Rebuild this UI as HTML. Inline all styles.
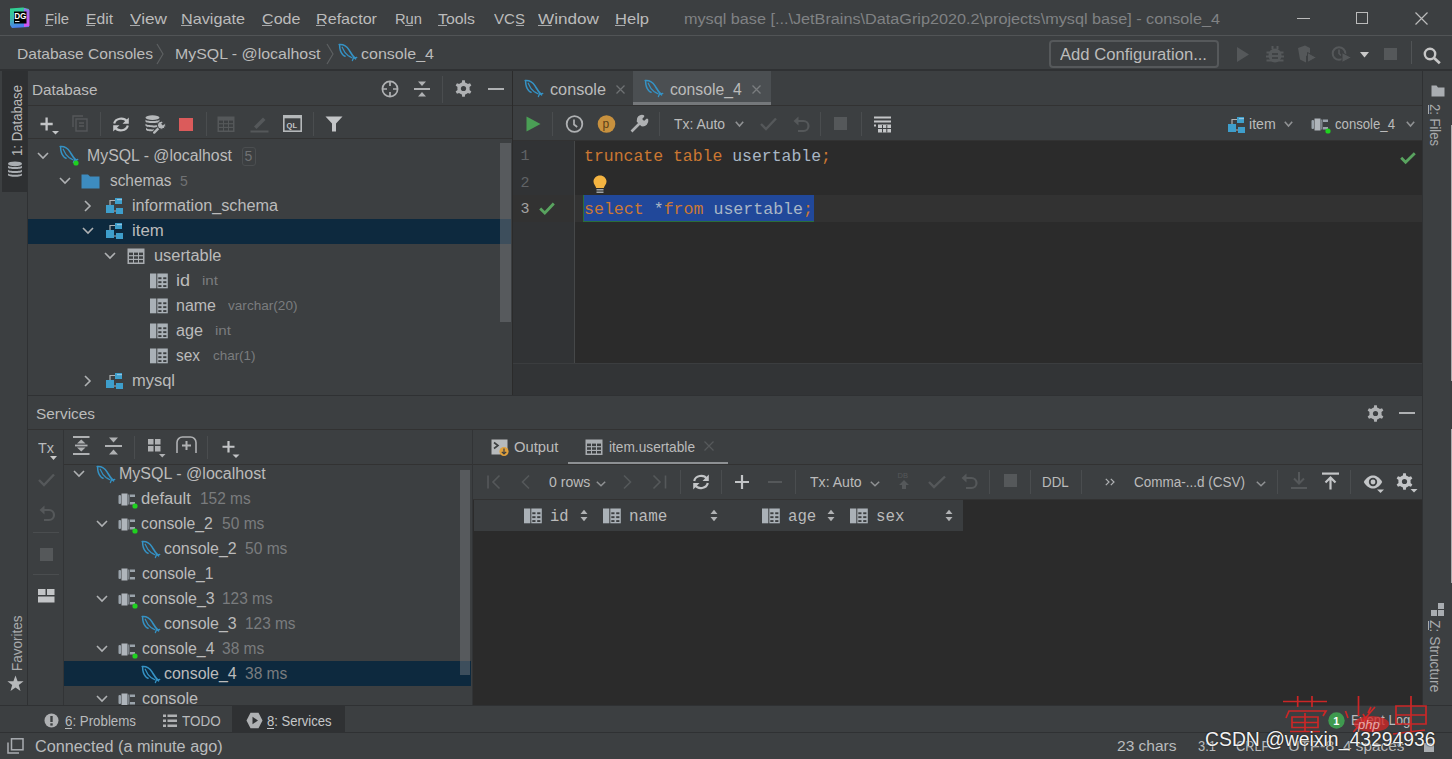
<!DOCTYPE html>
<html><head><meta charset="utf-8">
<style>
*{margin:0;padding:0;box-sizing:border-box}
html,body{width:1452px;height:759px;overflow:hidden;background:#3c3f41;font-family:"Liberation Sans",sans-serif;color:#bbbbbb}
.a{position:absolute;white-space:pre}
.r{position:absolute;overflow:visible}
</style></head><body>
<svg width="0" height="0" style="position:absolute"><defs>
<g id="dol" fill="none" stroke="#3592c4" stroke-linecap="round" stroke-linejoin="round">
<path d="M1.2 1.5C5 1.2 8.8 3.2 11 6.8C12.8 9.8 14.2 13 17.6 15.8" stroke-width="1.6"/>
<path d="M1.6 2C1.6 5.6 2.6 9.2 4.6 11.6C5.4 12.5 6.2 13 7 13.2" stroke-width="1.5"/>
<path d="M4.2 4.2C5.6 7.6 7.4 10.6 10 12.6C11.4 13.6 12.6 14.2 14 14.8" stroke-width="1.2"/>
<path d="M15.8 14.2L14.4 17.6M16.6 15L18.8 14.4" stroke-width="1.3"/>
</g>
<g id="tbld"><rect x="0.5" y="0.5" width="17" height="15.5" fill="#55585a"/><g fill="#3c3f41"><rect x="2" y="4.6" width="4" height="2.5"/><rect x="7" y="4.6" width="4" height="2.5"/><rect x="12" y="4.6" width="4" height="2.5"/><rect x="2" y="8.3" width="4" height="2.5"/><rect x="7" y="8.3" width="4" height="2.5"/><rect x="12" y="8.3" width="4" height="2.5"/><rect x="2" y="12" width="4" height="2.5"/><rect x="7" y="12" width="4" height="2.5"/><rect x="12" y="12" width="4" height="2.5"/></g></g>
<g id="conn">
<rect x="0.5" y="4" width="2.5" height="9" rx="1" fill="#9aa3ab"/>
<path d="M3.5 2.5H9.5V14.5H3.5Z" fill="#afb5bb"/>
<rect x="9.5" y="3.5" width="2" height="10" fill="#7d848a"/>
<rect x="12" y="3.5" width="5" height="2.5" fill="#9aa3ab"/>
<rect x="12" y="11" width="5" height="2.5" fill="#9aa3ab"/>
</g>
<g id="schema">
<rect x="10" y="1" width="7" height="6" fill="#3e9fcb"/>
<rect x="1" y="8" width="8" height="8" fill="#3e9ecb"/>
<rect x="11" y="11" width="7" height="6" fill="#3e9ecb"/>
<path d="M5 8V3.5H10M9 14H11" stroke="#afb1b3" stroke-width="1.2" fill="none"/>
<rect x="12" y="2" width="5" height="1.2" fill="#8fc4e4"/>
</g>
<g id="tbl"><rect x="0.5" y="0.5" width="17" height="15.5" fill="#a9adb1"/><g fill="#3c3f41"><rect x="2" y="4.6" width="4" height="2.5"/><rect x="7" y="4.6" width="4" height="2.5"/><rect x="12" y="4.6" width="4" height="2.5"/><rect x="2" y="8.3" width="4" height="2.5"/><rect x="7" y="8.3" width="4" height="2.5"/><rect x="12" y="8.3" width="4" height="2.5"/><rect x="2" y="12" width="4" height="2.5"/><rect x="7" y="12" width="4" height="2.5"/><rect x="12" y="12" width="4" height="2.5"/></g></g>
<g id="col"><rect x="0" y="0.5" width="6.3" height="14.8" fill="#aab1b7"/><rect x="7.3" y="0.5" width="10.5" height="14.8" fill="#aab1b7"/><g fill="#3c3f41"><rect x="8.3" y="4.3" width="3.2" height="1.9"/><rect x="13.2" y="4.3" width="3.2" height="1.9"/><rect x="8.3" y="8.2" width="3.2" height="1.9"/><rect x="13.2" y="8.2" width="3.2" height="1.9"/><rect x="8.3" y="12.1" width="3.2" height="1.9"/><rect x="13.2" y="12.1" width="3.2" height="1.9"/></g></g>
<g id="chevd"><path d="M1 1L6 6L11 1" fill="none" stroke="#afb1b3" stroke-width="1.6"/></g>
<g id="chevr"><path d="M1 1L6 6L1 11" fill="none" stroke="#afb1b3" stroke-width="1.6"/></g>
</defs></svg>
<div class="r" style="left:0px;top:0px;width:1452px;height:35px;background:#3c3f41;"></div>
<div class="r" style="left:0px;top:35px;width:1452px;height:1px;background:#515456;"></div>
<div class="r" style="left:0px;top:69px;width:1452px;height:2px;background:#2f3133;"></div>
<svg class="r" style="left:9px;top:7px;" width="22" height="22" viewBox="0 0 22 22"><defs><linearGradient id="lg" x1="0" y1="0" x2="0.3" y2="1"><stop offset="0" stop-color="#2bd98c"/><stop offset="0.5" stop-color="#3fb8a8"/><stop offset="1" stop-color="#4a7ef0"/></linearGradient><linearGradient id="lg2" x1="0" y1="0" x2="0" y2="1"><stop offset="0" stop-color="#9b6cf5"/><stop offset="1" stop-color="#e64cf0"/></linearGradient></defs><path d="M1 1.5L14 0.5L20 2V20L3 21L1 18Z" fill="url(#lg)"/><path d="M15 1L20.5 3V19L15 20Z" fill="url(#lg2)" opacity="0.9"/><rect x="5" y="4.5" width="12.5" height="12" fill="#000"/><text x="5.2" y="12" font-family="Liberation Sans" font-weight="bold" font-size="8.2" fill="#fff">DG</text><rect x="6" y="14" width="4.5" height="1" fill="#ddd"/></svg>
<div class="a" style="left:45px;top:8.80px;font-size:15px;line-height:20px;color:#bbbbbb;transform: scaleX(0.9929);transform-origin:0 0;">File</div>
<div class="r" style="left:45px;top:25px;width:8px;height:1px;background:#a8aaac;"></div>
<div class="a" style="left:86px;top:8.80px;font-size:15px;line-height:20px;color:#bbbbbb;transform: scaleX(1.0441);transform-origin:0 0;">Edit</div>
<div class="r" style="left:86px;top:25px;width:9px;height:1px;background:#a8aaac;"></div>
<div class="a" style="left:130px;top:8.80px;font-size:15px;line-height:20px;color:#bbbbbb;transform: scaleX(1.1473);transform-origin:0 0;">View</div>
<div class="r" style="left:130px;top:25px;width:10px;height:1px;background:#a8aaac;"></div>
<div class="a" style="left:181px;top:8.80px;font-size:15px;line-height:20px;color:#bbbbbb;transform: scaleX(1.0810);transform-origin:0 0;">Navigate</div>
<div class="r" style="left:181px;top:25px;width:11px;height:1px;background:#a8aaac;"></div>
<div class="a" style="left:262px;top:8.80px;font-size:15px;line-height:20px;color:#bbbbbb;transform: scaleX(1.0736);transform-origin:0 0;">Code</div>
<div class="r" style="left:262px;top:25px;width:10px;height:1px;background:#a8aaac;"></div>
<div class="a" style="left:316px;top:8.80px;font-size:15px;line-height:20px;color:#bbbbbb;transform: scaleX(1.0758);transform-origin:0 0;">Refactor</div>
<div class="r" style="left:316px;top:25px;width:9px;height:1px;background:#a8aaac;"></div>
<div class="a" style="left:395px;top:8.80px;font-size:15px;line-height:20px;color:#bbbbbb;transform: scaleX(0.9807);transform-origin:0 0;">Run</div>
<div class="r" style="left:405px;top:25px;width:8px;height:1px;background:#a8aaac;"></div>
<div class="a" style="left:438px;top:8.80px;font-size:15px;line-height:20px;color:#bbbbbb;transform: scaleX(1.0562);transform-origin:0 0;">Tools</div>
<div class="r" style="left:438px;top:25px;width:9px;height:1px;background:#a8aaac;"></div>
<div class="a" style="left:494px;top:8.80px;font-size:15px;line-height:20px;color:#bbbbbb;transform: scaleX(1.0051);transform-origin:0 0;">VCS</div>
<div class="r" style="left:516px;top:25px;width:8px;height:1px;background:#a8aaac;"></div>
<div class="a" style="left:538px;top:8.80px;font-size:15px;line-height:20px;color:#bbbbbb;transform: scaleX(1.1432);transform-origin:0 0;">Window</div>
<div class="r" style="left:538px;top:25px;width:14px;height:1px;background:#a8aaac;"></div>
<div class="a" style="left:615px;top:8.80px;font-size:15px;line-height:20px;color:#bbbbbb;transform: scaleX(1.1018);transform-origin:0 0;">Help</div>
<div class="r" style="left:615px;top:25px;width:10px;height:1px;background:#a8aaac;"></div>
<div class="a" style="left:684px;top:8.13px;font-size:15.5px;line-height:21px;color:#808284;transform: scaleX(1.0456);transform-origin:0 0;">mysql base [...\JetBrains\DataGrip2020.2\projects\mysql base] - console_4</div>
<div class="r" style="left:1297px;top:18px;width:13px;height:1px;background:#bbbbbb;"></div>
<div class="r" style="left:1356px;top:12px;width:12px;height:12px;background:transparent;border:1px solid #bbbbbb"></div>
<svg class="r" style="left:1415px;top:12px;" width="13" height="13" viewBox="0 0 13 13"><path d="M0.5 0.5L12.5 12.5M12.5 0.5L0.5 12.5" stroke="#bbbbbb" stroke-width="1.2"/></svg>
<div class="a" style="left:16.5px;top:43.80px;font-size:15px;line-height:20px;color:#bbbbbb;transform: scaleX(1.0388);transform-origin:0 0;">Database Consoles</div>
<svg class="r" style="left:155px;top:43px;" width="10" height="22" viewBox="0 0 10 22"><path d="M2 1L8 11L2 21" stroke="#5d6062" stroke-width="1.2" fill="none"/></svg>
<div class="a" style="left:174.5px;top:43.80px;font-size:15px;line-height:20px;color:#bbbbbb;transform: scaleX(1.0604);transform-origin:0 0;">MySQL - @localhost</div>
<svg class="r" style="left:325px;top:43px;" width="10" height="22" viewBox="0 0 10 22"><path d="M2 1L8 11L2 21" stroke="#5d6062" stroke-width="1.2" fill="none"/></svg>
<svg class="r" style="left:338px;top:43px;" width="20" height="20" viewBox="0 0 20 20"><use href="#dol"/></svg>
<div class="a" style="left:361px;top:43.80px;font-size:15px;line-height:20px;color:#bbbbbb;transform: scaleX(1.0674);transform-origin:0 0;">console_4</div>
<div class="r" style="left:1049px;top:40px;width:170px;height:28px;background:transparent;border:2px solid #56595b;border-radius:4px"></div>
<div class="a" style="left:1060px;top:43.96px;font-size:16px;line-height:21px;color:#bbbbbb;transform: scaleX(1.0394);transform-origin:0 0;">Add Configuration...</div>
<svg class="r" style="left:1236px;top:46px;" width="14" height="17" viewBox="0 0 14 17"><path d="M1 1L13 8.5L1 16Z" fill="#55585a"/></svg>
<svg class="r" style="left:1264px;top:45px;" width="22" height="18" viewBox="0 0 22 18"><g fill="#55585a"><ellipse cx="11" cy="10.5" rx="6.5" ry="7"/><rect x="7.5" y="1" width="2" height="3"/><rect x="12.5" y="1" width="2" height="3"/><rect x="2.5" y="6.5" width="17" height="2"/><rect x="2" y="10.5" width="18" height="2"/><rect x="2.5" y="14.5" width="17" height="2"/></g><rect x="8" y="8.2" width="6" height="1.6" fill="#3c3f41"/><rect x="8" y="12.2" width="6" height="1.6" fill="#3c3f41"/></svg>
<svg class="r" style="left:1297px;top:45px;" width="20" height="18" viewBox="0 0 20 18"><path d="M1 3L8 0.5L13 3V9L9 11V17.5L3 14.5Z" fill="#55585a"/><path d="M10.5 7.5L19.5 12.5L10.5 17.5Z" fill="#55585a" stroke="#3c3f41"/></svg>
<svg class="r" style="left:1331px;top:45px;" width="21" height="18" viewBox="0 0 21 18"><circle cx="8" cy="8.5" r="6.3" stroke="#55585a" stroke-width="2" fill="none"/><path d="M8 4.5V8.5L10 10.5" stroke="#55585a" stroke-width="1.6" fill="none"/><path d="M11 7.5L20.5 12.5L11 17.5Z" fill="#55585a" stroke="#3c3f41"/></svg>
<svg class="r" style="left:1360px;top:52px;" width="9" height="6" viewBox="0 0 9 6"><path d="M0 0H9L4.5 5.5Z" fill="#c9c9c9"/></svg>
<div class="r" style="left:1384px;top:48px;width:13px;height:12px;background:#55585a;"></div>
<div class="r" style="left:1411px;top:41px;width:1px;height:23px;background:#515456;"></div>
<svg class="r" style="left:1423px;top:47px;" width="19" height="17" viewBox="0 0 19 17"><circle cx="7" cy="7" r="5.2" stroke="#c7c7c7" stroke-width="2.4" fill="none"/><path d="M10.8 10.8L16.8 16.2" stroke="#c7c7c7" stroke-width="2.8"/></svg>
<div class="r" style="left:0px;top:71px;width:28px;height:635px;background:#3c3f41;"></div>
<div class="r" style="left:27px;top:71px;width:1px;height:635px;background:#2f3133;"></div>
<div class="r" style="left:2px;top:71px;width:25px;height:121px;background:#2e3032;"></div>
<div class="a" style="left:7.10px;top:155.6px;font-size:15px;line-height:20px;color:#bbbbbb;transform:rotate(-90deg) scaleX(0.8777);transform-origin:0 0;">1: Database</div>
<svg class="r" style="left:7px;top:161px;" width="16" height="17" viewBox="0 0 16 17"><g fill="#a9adb1"><ellipse cx="8" cy="2.8" rx="7" ry="2.4"/><path d="M1 4.6C1 6.6 15 6.6 15 4.6V6.6C15 8.6 1 8.6 1 6.6Z"/><path d="M1 8.4C1 10.4 15 10.4 15 8.4V10.4C15 12.4 1 12.4 1 10.4Z"/><path d="M1 12.2C1 14.2 15 14.2 15 12.2V14C15 16.4 1 16.4 1 14Z"/></g></svg>
<div class="a" style="left:8.15px;top:670.5px;font-size:14px;line-height:19px;color:#a9abad;transform:rotate(-90deg) scaleX(0.9639);transform-origin:0 0;">Favorites</div>
<svg class="r" style="left:7px;top:675px;" width="17" height="17" viewBox="0 0 17 17"><path d="M8.5 0.5L10.6 6.2L16.6 6.3L11.8 10L13.5 16L8.5 12.5L3.5 16L5.2 10L0.4 6.3L6.4 6.2Z" fill="#b7b9bb"/></svg>
<div class="r" style="left:28px;top:71px;width:484px;height:324px;background:#3c3f41;"></div>
<div class="r" style="left:28px;top:105px;width:484px;height:1px;background:#323232;"></div>
<div class="r" style="left:28px;top:138px;width:484px;height:1px;background:#323232;"></div>
<div class="r" style="left:512px;top:71px;width:1px;height:324px;background:#2b2b2b;"></div>
<div class="a" style="left:32px;top:79.13px;font-size:15.5px;line-height:21px;color:#bbbbbb;transform: scaleX(0.9870);transform-origin:0 0;">Database</div>
<svg class="r" style="left:381px;top:80px;" width="18" height="18" viewBox="0 0 18 18"><circle cx="9" cy="9" r="7.6" stroke="#afb1b3" stroke-width="1.7" fill="none"/><path d="M9 1.5V6M9 12V16.5M1.5 9H6M12 9H16.5" stroke="#afb1b3" stroke-width="1.7"/></svg>
<svg class="r" style="left:414px;top:81px;" width="16" height="16" viewBox="0 0 16 16"><rect x="0" y="7" width="16" height="2" fill="#afb1b3"/><path d="M4 0.5H12L8 5Z M4 15.5H12L8 11Z" fill="#afb1b3"/></svg>
<div class="r" style="left:442px;top:76px;width:1px;height:27px;background:#4a4d4f;"></div>
<svg class="r" style="left:455px;top:80px;" width="17" height="18" viewBox="0 0 17 18"><path d="M6.07 2.80L6.91 2.51L7.16 0.21L9.84 0.21L10.09 2.51L12.22 3.54L12.89 4.12L15.01 3.19L16.35 5.51L14.49 6.88L14.66 9.24L14.49 10.12L16.35 11.49L15.01 13.81L12.89 12.88L10.93 14.20L10.09 14.49L9.84 16.79L7.16 16.79L6.91 14.49L4.78 13.46L4.11 12.88L1.99 13.81L0.65 11.49L2.51 10.12L2.34 7.76L2.51 6.88L0.65 5.51L1.99 3.19L4.11 4.12Z" fill="#afb1b3"/><circle cx="8.5" cy="8.5" r="2.6" fill="#3c3f41"/></svg>
<div class="r" style="left:488px;top:88px;width:16px;height:2px;background:#afb1b3;"></div>
<svg class="r" style="left:40px;top:117px;" width="20" height="18" viewBox="0 0 20 18"><path d="M6.6 0.5V13.5M0.5 7H12.7" stroke="#c3c5c7" stroke-width="2.3"/><path d="M12 14H19L15.5 17.5Z" fill="#c3c5c7"/></svg>
<svg class="r" style="left:72px;top:115px;" width="16" height="17" viewBox="0 0 16 17"><g fill="none" stroke="#55585a" stroke-width="1.4"><path d="M1 12V1H11"/><rect x="4" y="4" width="11" height="12"/><path d="M7 8H12M7 11H12"/></g></svg>
<div class="r" style="left:100px;top:112px;width:1px;height:24px;background:#4a4d4f;"></div>
<svg class="r" style="left:112px;top:117px;" width="18" height="15" viewBox="0 0 18 15"><path d="M2.2 6.5A7 6 0 0 1 15 4.5M15.8 8.5A7 6 0 0 1 3 10.5" stroke="#c3c5c7" stroke-width="2.2" fill="none"/><path d="M16.8 0.5V6.8H10.5Z M1.2 14.5V8.2H7.5Z" fill="#c3c5c7"/></svg>
<svg class="r" style="left:145px;top:115px;" width="21" height="19" viewBox="0 0 21 19"><g fill="#b5b8ba"><ellipse cx="7.5" cy="2.6" rx="7" ry="2.3"/><path d="M0.5 4.6C0.5 6.6 14.5 6.6 14.5 4.6V6.6C14.5 8.6 0.5 8.6 0.5 6.6Z"/><path d="M0.5 8.6C0.5 10.6 11 10.8 12.5 10V12C11 12.8 0.5 12.6 0.5 10.6Z"/><path d="M1 12.6C1 14.4 7 14.8 9 14.3V16C7 16.6 1 16.2 1 14.4Z"/></g><path d="M9.2 17.6L14.6 12.2" stroke="#3c3f41" stroke-width="4.2" stroke-linecap="round"/><path d="M9.2 17.6L14.6 12.2" stroke="#b5b8ba" stroke-width="2.4" stroke-linecap="round"/><circle cx="16.4" cy="10.2" r="4" fill="#b5b8ba" stroke="#3c3f41" stroke-width="1"/><path d="M17 9.6L20.5 6.1" stroke="#3c3f41" stroke-width="2.4"/></svg>
<div class="r" style="left:179px;top:118px;width:14px;height:13px;background:#db5b5b;"></div>
<div class="r" style="left:206px;top:112px;width:1px;height:24px;background:#4a4d4f;"></div>
<svg class="r" style="left:217px;top:116px;" width="19" height="16" viewBox="0 0 19 16"><use href="#tbld"/></svg>
<svg class="r" style="left:250px;top:114px;" width="19" height="19" viewBox="0 0 19 19"><path d="M4 12.5L13 3.5L15.5 6L6.5 15Z" fill="#55585a"/><path d="M0.5 17.5H18.5" stroke="#55585a" stroke-width="2"/></svg>
<svg class="r" style="left:283px;top:115px;" width="19" height="17" viewBox="0 0 19 17"><rect x="0.8" y="0.8" width="17.4" height="15.4" fill="none" stroke="#b5b8ba" stroke-width="1.6"/><rect x="0.8" y="0.8" width="17.4" height="2.5" fill="#b5b8ba"/><text x="3.6" y="13" font-family="Liberation Sans" font-weight="bold" font-size="7.5" fill="#c5c7c9">QL</text></svg>
<div class="r" style="left:313px;top:112px;width:1px;height:24px;background:#4a4d4f;"></div>
<svg class="r" style="left:325px;top:116px;" width="18" height="16" viewBox="0 0 18 16"><path d="M0.5 0.5H17.5L11 7.5V15.5H7V7.5Z" fill="#c3c5c7"/></svg>
<div class="r" style="left:28px;top:218.5px;width:483px;height:25px;background:#0d293e;"></div>
<svg class="r" style="left:37px;top:152px;" width="12" height="8" viewBox="0 0 12 8"><use href="#chevd"/></svg>
<svg class="r" style="left:59px;top:145px;" width="20" height="20" viewBox="0 0 20 20"><use href="#dol"/></svg>
<svg class="r" style="left:73px;top:160px;" width="6" height="6" viewBox="0 0 6 6"><circle cx="3" cy="3" r="2.6" fill="#1fd11f"/></svg>
<div class="a" style="left:87px;top:145.46px;font-size:16px;line-height:21px;color:#bbbbbb;transform: scaleX(0.9907);transform-origin:0 0;">MySQL - @localhost</div>
<div class="r" style="left:242px;top:147px;width:14px;height:19px;background:transparent;border:1px solid #4b4e50;border-radius:3px"></div>
<div class="a" style="left:244.5px;top:147.15px;font-size:14px;line-height:19px;color:#707274;">5</div>
<svg class="r" style="left:59px;top:177px;" width="12" height="8" viewBox="0 0 12 8"><use href="#chevd"/></svg>
<svg class="r" style="left:81px;top:173px;" width="19" height="16" viewBox="0 0 19 16"><path d="M0.5 1.5H7L9 3.5H18.5V15.5H0.5Z" fill="#3d8cc0"/></svg>
<div class="a" style="left:109.5px;top:169.96px;font-size:16px;line-height:21px;color:#bbbbbb;transform: scaleX(0.9605);transform-origin:0 0;">schemas</div>
<div class="a" style="left:180px;top:171.65px;font-size:14px;line-height:19px;color:#707274;">5</div>
<svg class="r" style="left:84px;top:200px;" width="8" height="12" viewBox="0 0 8 12"><use href="#chevr"/></svg>
<svg class="r" style="left:105px;top:197px;" width="18" height="18" viewBox="0 0 18 18"><use href="#schema"/></svg>
<div class="a" style="left:131.8px;top:194.96px;font-size:16px;line-height:21px;color:#bbbbbb;transform: scaleX(1.0133);transform-origin:0 0;">information_schema</div>
<svg class="r" style="left:82px;top:227px;" width="12" height="8" viewBox="0 0 12 8"><use href="#chevd"/></svg>
<svg class="r" style="left:105px;top:222px;" width="18" height="18" viewBox="0 0 18 18"><use href="#schema"/></svg>
<div class="a" style="left:131.8px;top:219.96px;font-size:16px;line-height:21px;color:#bbbbbb;transform: scaleX(1.0485);transform-origin:0 0;">item</div>
<svg class="r" style="left:104px;top:252px;" width="12" height="8" viewBox="0 0 12 8"><use href="#chevd"/></svg>
<svg class="r" style="left:127px;top:248px;" width="18" height="16" viewBox="0 0 18 16"><use href="#tbl"/></svg>
<div class="a" style="left:154px;top:244.96px;font-size:16px;line-height:21px;color:#bbbbbb;transform: scaleX(1.0239);transform-origin:0 0;">usertable</div>
<svg class="r" style="left:150px;top:273px;" width="18" height="16" viewBox="0 0 18 16"><use href="#col"/></svg>
<div class="a" style="left:176px;top:270.46px;font-size:16px;line-height:21px;color:#bbbbbb;transform: scaleX(1.1242);transform-origin:0 0;">id</div>
<div class="a" style="left:202px;top:272.32px;font-size:13.5px;line-height:18px;color:#7a7c7e;transform: scaleX(1.1216);transform-origin:0 0;">int</div>
<svg class="r" style="left:150px;top:298px;" width="18" height="16" viewBox="0 0 18 16"><use href="#col"/></svg>
<div class="a" style="left:176px;top:295.46px;font-size:16px;line-height:21px;color:#bbbbbb;transform: scaleX(0.9992);transform-origin:0 0;">name</div>
<div class="a" style="left:228px;top:297.32px;font-size:13.5px;line-height:18px;color:#7a7c7e;transform: scaleX(1.0068);transform-origin:0 0;">varchar(20)</div>
<svg class="r" style="left:150px;top:323px;" width="18" height="16" viewBox="0 0 18 16"><use href="#col"/></svg>
<div class="a" style="left:176px;top:320.46px;font-size:16px;line-height:21px;color:#bbbbbb;transform: scaleX(1.0111);transform-origin:0 0;">age</div>
<div class="a" style="left:215px;top:322.32px;font-size:13.5px;line-height:18px;color:#7a7c7e;transform: scaleX(1.1216);transform-origin:0 0;">int</div>
<svg class="r" style="left:150px;top:348px;" width="18" height="16" viewBox="0 0 18 16"><use href="#col"/></svg>
<div class="a" style="left:176px;top:345.46px;font-size:16px;line-height:21px;color:#bbbbbb;transform: scaleX(0.9636);transform-origin:0 0;">sex</div>
<div class="a" style="left:212.5px;top:347.32px;font-size:13.5px;line-height:18px;color:#7a7c7e;transform: scaleX(0.9938);transform-origin:0 0;">char(1)</div>
<svg class="r" style="left:84px;top:375px;" width="8" height="12" viewBox="0 0 8 12"><use href="#chevr"/></svg>
<svg class="r" style="left:105px;top:372px;" width="18" height="18" viewBox="0 0 18 18"><use href="#schema"/></svg>
<div class="a" style="left:131.5px;top:369.96px;font-size:16px;line-height:21px;color:#bbbbbb;transform: scaleX(1.0292);transform-origin:0 0;">mysql</div>
<div class="r" style="left:500px;top:143px;width:11px;height:179px;background:rgba(120,124,128,0.45);"></div>
<div class="r" style="left:513px;top:71px;width:909px;height:34px;background:#3c3f41;"></div>
<div class="r" style="left:633px;top:71px;width:138px;height:34px;background:#4b4f52;"></div>
<div class="r" style="left:633px;top:102px;width:138px;height:3px;background:#75787b;"></div>
<div class="r" style="left:513px;top:105px;width:909px;height:1px;background:#323232;"></div>
<svg class="r" style="left:524px;top:79px;" width="20" height="19" viewBox="0 0 20 19"><use href="#dol"/></svg>
<div class="a" style="left:549.5px;top:78.96px;font-size:16px;line-height:21px;color:#bbbbbb;transform: scaleX(1.0153);transform-origin:0 0;">console</div>
<svg class="r" style="left:616px;top:85px;" width="9" height="9" viewBox="0 0 9 9"><path d="M0.5 0.5L8.5 8.5M8.5 0.5L0.5 8.5" stroke="#6e7173" stroke-width="1.3"/></svg>
<svg class="r" style="left:644px;top:79px;" width="20" height="19" viewBox="0 0 20 19"><use href="#dol"/></svg>
<div class="a" style="left:669.7px;top:78.96px;font-size:16px;line-height:21px;color:#bbbbbb;transform: scaleX(0.9828);transform-origin:0 0;">console_4</div>
<svg class="r" style="left:752px;top:85px;" width="9" height="9" viewBox="0 0 9 9"><path d="M0.5 0.5L8.5 8.5M8.5 0.5L0.5 8.5" stroke="#7a7d7f" stroke-width="1.3"/></svg>
<div class="r" style="left:513px;top:106px;width:909px;height:34px;background:#3c3f41;"></div>
<div class="r" style="left:513px;top:140px;width:909px;height:1px;background:#323232;"></div>
<svg class="r" style="left:526px;top:116px;" width="15" height="16" viewBox="0 0 15 16"><path d="M0.5 0.5L14.5 8L0.5 15.5Z" fill="#4a9f55"/></svg>
<div class="r" style="left:552px;top:112px;width:1px;height:24px;background:#4a4d4f;"></div>
<svg class="r" style="left:565px;top:115px;" width="19" height="18" viewBox="0 0 19 18"><circle cx="9.5" cy="9" r="7.8" stroke="#afb1b3" stroke-width="1.8" fill="none"/><path d="M9 4.5V9.5L12.2 12" stroke="#afb1b3" stroke-width="1.7" fill="none"/></svg>
<svg class="r" style="left:597px;top:115px;" width="19" height="18" viewBox="0 0 19 18"><circle cx="9.5" cy="9" r="8.8" fill="#c8913e"/><text x="5.6" y="12.6" font-family="Liberation Sans" font-size="12" fill="#5b3f17">p</text></svg>
<svg class="r" style="left:630px;top:115px;" width="19" height="18" viewBox="0 0 19 18"><path d="M1.5 16.5L9.5 8.5M8 6C7.5 3 10 0.5 13 1.2L10.8 3.5L12 6.2L14.8 7.2L17 5C17.6 8 15 10.5 12 10Z" stroke="#afb1b3" stroke-width="2.6" fill="#afb1b3" stroke-linejoin="round"/></svg>
<div class="r" style="left:659px;top:112px;width:1px;height:24px;background:#4a4d4f;"></div>
<div class="a" style="left:674px;top:115.48px;font-size:14.5px;line-height:19px;color:#bbbbbb;transform: scaleX(0.9586);transform-origin:0 0;">Tx: Auto</div>
<svg class="r" style="left:735px;top:121px;" width="9" height="7" viewBox="0 0 9 7"><path d="M0.8 0.8L4.5 5L8.2 0.8" stroke="#909294" stroke-width="1.6" fill="none"/></svg>
<svg class="r" style="left:760px;top:117px;" width="17" height="14" viewBox="0 0 17 14"><path d="M1 7L6 12L16 1.5" stroke="#55585a" stroke-width="2.4" fill="none"/></svg>
<svg class="r" style="left:793px;top:116px;" width="17" height="16" viewBox="0 0 17 16"><path d="M2 5H10.5A5 5 0 0 1 10.5 15H5" stroke="#55585a" stroke-width="2.2" fill="none"/><path d="M0.5 5L5.5 0.5V9.5Z" fill="#55585a"/></svg>
<div class="r" style="left:820px;top:112px;width:1px;height:24px;background:#4a4d4f;"></div>
<div class="r" style="left:834px;top:117px;width:13px;height:13px;background:#55585a;"></div>
<div class="r" style="left:861px;top:112px;width:1px;height:24px;background:#4a4d4f;"></div>
<svg class="r" style="left:874px;top:116px;" width="18" height="17" viewBox="0 0 18 17"><g fill="#c3c5c7"><rect x="0" y="0.5" width="17" height="2"/><rect x="0" y="4.5" width="17" height="2"/><rect x="0" y="8.5" width="2" height="2"/><rect x="4" y="8.5" width="13" height="8"/></g><path d="M4 12.5H17M8.5 9V16.5M12.8 9V16.5" stroke="#3c3f41" stroke-width="1"/></svg>
<svg class="r" style="left:1227px;top:116px;" width="18" height="18" viewBox="0 0 18 18"><use href="#schema"/></svg>
<div class="a" style="left:1249px;top:115.48px;font-size:14.5px;line-height:19px;color:#bbbbbb;transform: scaleX(0.9742);transform-origin:0 0;">item</div>
<svg class="r" style="left:1284px;top:121px;" width="9" height="7" viewBox="0 0 9 7"><path d="M0.8 0.8L4.5 5L8.2 0.8" stroke="#909294" stroke-width="1.6" fill="none"/></svg>
<svg class="r" style="left:1311px;top:116px;" width="18" height="17" viewBox="0 0 18 17"><use href="#conn"/></svg>
<svg class="r" style="left:1325px;top:128px;" width="6" height="6" viewBox="0 0 6 6"><circle cx="3" cy="3" r="2.6" fill="#1fd11f"/></svg>
<div class="a" style="left:1335px;top:115.48px;font-size:14.5px;line-height:19px;color:#bbbbbb;transform: scaleX(0.9076);transform-origin:0 0;">console_4</div>
<svg class="r" style="left:1406px;top:121px;" width="9" height="7" viewBox="0 0 9 7"><path d="M0.8 0.8L4.5 5L8.2 0.8" stroke="#909294" stroke-width="1.6" fill="none"/></svg>
<div class="r" style="left:513px;top:141px;width:909px;height:254px;background:#2b2b2b;"></div>
<div class="r" style="left:513px;top:141px;width:61px;height:254px;background:#313335;"></div>
<div class="r" style="left:574px;top:141px;width:1px;height:254px;background:#464849;"></div>
<div class="r" style="left:575px;top:195px;width:847px;height:27px;background:#323232;"></div>
<div class="r" style="left:513px;top:195px;width:61px;height:27px;background:#323232;"></div>
<div class="a" style="left:520.4px;top:147.40px;font-size:15px;line-height:20px;color:#606366;font-family:'Liberation Mono',monospace;">1</div>
<div class="a" style="left:520.4px;top:174.00px;font-size:15px;line-height:20px;color:#606366;font-family:'Liberation Mono',monospace;">2</div>
<div class="a" style="left:520.4px;top:200.00px;font-size:15px;line-height:20px;color:#a4a3a3;font-family:'Liberation Mono',monospace;">3</div>
<svg class="r" style="left:539px;top:202px;" width="16" height="13" viewBox="0 0 16 13"><path d="M1.2 6.5L5.8 11L14.8 1.5" stroke="#59a35f" stroke-width="2.8" fill="none"/></svg>
<div class="a" style="left:584px;top:146.00px;font-size:16.5px;line-height:22px;color:#cc7832;font-family:'Liberation Mono',monospace;transform: scaleX(0.9977);transform-origin:0 0;"><span style="color:#cc7832">truncate table</span><span style="color:#a9b7c6"> usertable</span><span style="color:#cc7832">;</span></div>
<svg class="r" style="left:593px;top:175px;" width="14" height="19" viewBox="0 0 14 19"><path d="M7 0.5C10.6 0.5 13.5 3.2 13.5 6.6C13.5 9.2 11.6 10.6 10.8 13H3.2C2.4 10.6 0.5 9.2 0.5 6.6C0.5 3.2 3.4 0.5 7 0.5Z" fill="#f4b441"/><rect x="3.5" y="14" width="7" height="1.5" fill="#9ea3a6"/><rect x="3.5" y="16.5" width="7" height="1.5" fill="#9ea3a6"/></svg>
<div class="r" style="left:583px;top:195px;width:231px;height:27px;background:#21489a;box-shadow:inset 1px -1px 0 #2a6e3a"></div>
<div class="a" style="left:584px;top:198.80px;font-size:16.5px;line-height:22px;color:#cc7832;font-family:'Liberation Mono',monospace;transform: scaleX(1.0054);transform-origin:0 0;"><span style="color:#cc7832">select </span><span style="color:#a9b7c6">*</span><span style="color:#cc7832">from</span><span style="color:#a9b7c6"> usertable</span><span style="color:#cc7832">;</span></div>
<div class="r" style="left:513px;top:363px;width:909px;height:1px;background:#3b3d3f;"></div>
<div class="r" style="left:513px;top:364px;width:909px;height:31px;background:#323436;"></div>
<svg class="r" style="left:1400px;top:152px;" width="16" height="12" viewBox="0 0 16 12"><path d="M1.2 5.8L5.6 10.2L14.8 1.2" stroke="#59a35f" stroke-width="2.8" fill="none"/></svg>
<div class="r" style="left:1422px;top:71px;width:30px;height:635px;background:#3c3f41;"></div>
<div class="r" style="left:1422px;top:71px;width:1px;height:635px;background:#2f3133;"></div>
<svg class="r" style="left:1431px;top:85px;" width="14" height="12" viewBox="0 0 14 12"><path d="M0.5 0.5H5.5L7 2.5H13.5V11.5H0.5Z" fill="#a9adb1"/></svg>
<div class="r" style="left:1428px;top:105px;width:1px;height:9px;background:#a9abad;"></div>
<div class="a" style="left:1444px;top:104px;font-size:14px;line-height:18px;color:#a9abad;transform:rotate(90deg) scaleX(0.93);transform-origin:0 0;">2: Files</div>
<svg class="r" style="left:1431px;top:603px;" width="14" height="14" viewBox="0 0 14 14"><g fill="#a9adb1"><rect x="7" y="0" width="6" height="6"/><rect x="0" y="7" width="6" height="6"/><rect x="7" y="7" width="6" height="6"/></g></svg>
<div class="r" style="left:1428px;top:621px;width:1px;height:9px;background:#a9abad;"></div>
<div class="a" style="left:1444px;top:620px;font-size:14px;line-height:18px;color:#a9abad;transform:rotate(90deg) scaleX(0.99);transform-origin:0 0;">Z: Structure</div>
<div class="r" style="left:28px;top:395px;width:1394px;height:311px;background:#3c3f41;"></div>
<div class="r" style="left:28px;top:395px;width:1394px;height:1px;background:#2f3133;"></div>
<div class="a" style="left:36.3px;top:403.13px;font-size:15.5px;line-height:21px;color:#bbbbbb;transform: scaleX(0.9926);transform-origin:0 0;">Services</div>
<svg class="r" style="left:1367px;top:405px;" width="17" height="17" viewBox="0 0 17 17"><path d="M6.07 2.80L6.91 2.51L7.16 0.21L9.84 0.21L10.09 2.51L12.22 3.54L12.89 4.12L15.01 3.19L16.35 5.51L14.49 6.88L14.66 9.24L14.49 10.12L16.35 11.49L15.01 13.81L12.89 12.88L10.93 14.20L10.09 14.49L9.84 16.79L7.16 16.79L6.91 14.49L4.78 13.46L4.11 12.88L1.99 13.81L0.65 11.49L2.51 10.12L2.34 7.76L2.51 6.88L0.65 5.51L1.99 3.19L4.11 4.12Z" fill="#afb1b3"/><circle cx="8.5" cy="8.5" r="2.6" fill="#3c3f41"/></svg>
<div class="r" style="left:1399px;top:412px;width:16px;height:2px;background:#afb1b3;"></div>
<div class="r" style="left:28px;top:429px;width:1394px;height:1px;background:#323232;"></div>
<div class="r" style="left:63px;top:430px;width:1px;height:276px;background:#323436;"></div>
<div class="a" style="left:38px;top:439.48px;font-size:14.5px;line-height:19px;color:#b9bbbd;transform: scaleX(0.9932);transform-origin:0 0;">Tx</div>
<svg class="r" style="left:50px;top:456px;" width="7" height="4" viewBox="0 0 7 4"><path d="M0 0H7L3.5 4Z" fill="#c9c9c9"/></svg>
<svg class="r" style="left:38px;top:473px;" width="17" height="14" viewBox="0 0 17 14"><path d="M1 7L6 12L16 1.5" stroke="#55585a" stroke-width="2.4" fill="none"/></svg>
<svg class="r" style="left:39px;top:505px;" width="16" height="17" viewBox="0 0 16 17"><path d="M2 5H10A5 5 0 0 1 10 15H5" stroke="#55585a" stroke-width="2.2" fill="none"/><path d="M0.5 5L5.5 0.5V9.5Z" fill="#55585a"/></svg>
<div class="r" style="left:33px;top:532px;width:26px;height:1px;background:#4a4d4f;"></div>
<div class="r" style="left:40px;top:548px;width:13px;height:13px;background:#55585a;"></div>
<div class="r" style="left:33px;top:574px;width:26px;height:1px;background:#4a4d4f;"></div>
<svg class="r" style="left:38px;top:589px;" width="17" height="14" viewBox="0 0 17 14"><g fill="#c3c5c7"><rect x="0" y="0" width="7.5" height="6"/><rect x="9" y="0" width="7.5" height="6"/><rect x="0" y="7.5" width="16.5" height="6"/></g></svg>
<div class="r" style="left:64px;top:464px;width:408px;height:1px;background:#323232;"></div>
<svg class="r" style="left:73px;top:436px;" width="17" height="20" viewBox="0 0 17 20"><g fill="#afb1b3"><rect x="0" y="0" width="16.5" height="2"/><rect x="0" y="17" width="16.5" height="2"/><path d="M4 7.5L8.25 3.5L12.5 7.5Z M4 11.5L8.25 15.5L12.5 11.5Z"/><rect x="2" y="8.6" width="12.5" height="1.8"/></g></svg>
<svg class="r" style="left:105px;top:437px;" width="17" height="18" viewBox="0 0 17 18"><g fill="#afb1b3"><rect x="0" y="8" width="17" height="2"/><path d="M4 0.5H13L8.5 5.5Z M4 17.5H13L8.5 12.5Z"/></g></svg>
<div class="r" style="left:134px;top:436px;width:1px;height:23px;background:#4a4d4f;"></div>
<svg class="r" style="left:148px;top:439px;" width="18" height="19" viewBox="0 0 18 19"><g fill="#afb1b3"><rect x="0" y="0" width="5.5" height="5.5"/><rect x="7" y="0" width="5.5" height="5.5"/><rect x="0" y="7" width="5.5" height="5.5"/><rect x="7" y="7" width="5.5" height="5.5"/><path d="M11 15H17.5L14.25 18.5Z"/></g></svg>
<svg class="r" style="left:176px;top:436px;" width="21" height="18" viewBox="0 0 21 18"><path d="M1 17V6.5A5.5 5.5 0 0 1 6.5 1H14.5A5.5 5.5 0 0 1 20 6.5V17" stroke="#afb1b3" stroke-width="1.6" fill="none"/><path d="M10.5 5V14M6 9.5H15" stroke="#afb1b3" stroke-width="2"/></svg>
<div class="r" style="left:207px;top:436px;width:1px;height:23px;background:#4a4d4f;"></div>
<svg class="r" style="left:222px;top:441px;" width="19" height="18" viewBox="0 0 19 18"><path d="M6.5 0V11.5M0.5 5.75H12.5" stroke="#c3c5c7" stroke-width="2.2"/><path d="M10.5 13.5H17.5L14 17Z" fill="#c3c5c7"/></svg>
<div class="r" style="left:64px;top:661px;width:407px;height:25px;background:#0d293e;"></div>
<svg class="r" style="left:73px;top:469.5px;" width="12" height="8" viewBox="0 0 12 8"><use href="#chevd"/></svg>
<svg class="r" style="left:96px;top:464.5px;" width="19" height="18" viewBox="0 0 19 18"><use href="#dol"/></svg>
<div class="a" style="left:119.3px;top:462.96px;font-size:16px;line-height:21px;color:#bbbbbb;transform: scaleX(1.0016);transform-origin:0 0;">MySQL - @localhost</div>
<svg class="r" style="left:118.4px;top:490.5px;" width="18" height="17" viewBox="0 0 18 17"><use href="#conn"/></svg>
<svg class="r" style="left:132.4px;top:502.5px;" width="6" height="6" viewBox="0 0 6 6"><circle cx="3" cy="3" r="2.6" fill="#1fd11f"/></svg>
<div class="a" style="left:141.4px;top:487.96px;font-size:16px;line-height:21px;color:#bbbbbb;transform: scaleX(1.0365);transform-origin:0 0;">default</div>
<div class="a" style="left:200.4px;top:487.96px;font-size:16px;line-height:21px;color:#7a7c7e;transform: scaleX(0.9644);transform-origin:0 0;">152 ms</div>
<svg class="r" style="left:96px;top:519.5px;" width="12" height="8" viewBox="0 0 12 8"><use href="#chevd"/></svg>
<svg class="r" style="left:118.4px;top:515.5px;" width="18" height="17" viewBox="0 0 18 17"><use href="#conn"/></svg>
<svg class="r" style="left:132.4px;top:527.5px;" width="6" height="6" viewBox="0 0 6 6"><circle cx="3" cy="3" r="2.6" fill="#1fd11f"/></svg>
<div class="a" style="left:141.4px;top:512.96px;font-size:16px;line-height:21px;color:#bbbbbb;transform: scaleX(0.9856);transform-origin:0 0;">console_2</div>
<div class="a" style="left:221.6px;top:512.96px;font-size:16px;line-height:21px;color:#7a7c7e;transform: scaleX(0.9730);transform-origin:0 0;">50 ms</div>
<svg class="r" style="left:140.5px;top:539.5px;" width="19" height="18" viewBox="0 0 19 18"><use href="#dol"/></svg>
<div class="a" style="left:164.3px;top:537.96px;font-size:16px;line-height:21px;color:#bbbbbb;transform: scaleX(0.9965);transform-origin:0 0;">console_2</div>
<div class="a" style="left:244.6px;top:537.96px;font-size:16px;line-height:21px;color:#7a7c7e;transform: scaleX(0.9730);transform-origin:0 0;">50 ms</div>
<svg class="r" style="left:118.4px;top:565.5px;" width="18" height="17" viewBox="0 0 18 17"><use href="#conn"/></svg>
<div class="a" style="left:141.5px;top:562.96px;font-size:16px;line-height:21px;color:#bbbbbb;transform: scaleX(0.9801);transform-origin:0 0;">console_1</div>
<svg class="r" style="left:96px;top:594.5px;" width="12" height="8" viewBox="0 0 12 8"><use href="#chevd"/></svg>
<svg class="r" style="left:118.4px;top:590.5px;" width="18" height="17" viewBox="0 0 18 17"><use href="#conn"/></svg>
<svg class="r" style="left:132.4px;top:602.5px;" width="6" height="6" viewBox="0 0 6 6"><circle cx="3" cy="3" r="2.6" fill="#1fd11f"/></svg>
<div class="a" style="left:141.5px;top:587.96px;font-size:16px;line-height:21px;color:#bbbbbb;transform: scaleX(0.9965);transform-origin:0 0;">console_3</div>
<div class="a" style="left:222px;top:587.96px;font-size:16px;line-height:21px;color:#7a7c7e;transform: scaleX(0.9663);transform-origin:0 0;">123 ms</div>
<svg class="r" style="left:140.5px;top:614.5px;" width="19" height="18" viewBox="0 0 19 18"><use href="#dol"/></svg>
<div class="a" style="left:164.3px;top:612.96px;font-size:16px;line-height:21px;color:#bbbbbb;transform: scaleX(0.9965);transform-origin:0 0;">console_3</div>
<div class="a" style="left:245px;top:612.96px;font-size:16px;line-height:21px;color:#7a7c7e;transform: scaleX(0.9625);transform-origin:0 0;">123 ms</div>
<svg class="r" style="left:96px;top:644.5px;" width="12" height="8" viewBox="0 0 12 8"><use href="#chevd"/></svg>
<svg class="r" style="left:118.4px;top:640.5px;" width="18" height="17" viewBox="0 0 18 17"><use href="#conn"/></svg>
<svg class="r" style="left:132.4px;top:652.5px;" width="6" height="6" viewBox="0 0 6 6"><circle cx="3" cy="3" r="2.6" fill="#1fd11f"/></svg>
<div class="a" style="left:141.5px;top:637.96px;font-size:16px;line-height:21px;color:#bbbbbb;transform: scaleX(0.9938);transform-origin:0 0;">console_4</div>
<div class="a" style="left:221.5px;top:637.96px;font-size:16px;line-height:21px;color:#7a7c7e;transform: scaleX(0.9707);transform-origin:0 0;">38 ms</div>
<svg class="r" style="left:140.5px;top:664.5px;" width="19" height="18" viewBox="0 0 19 18"><use href="#dol"/></svg>
<div class="a" style="left:164.3px;top:662.96px;font-size:16px;line-height:21px;color:#bbbbbb;transform: scaleX(0.9965);transform-origin:0 0;">console_4</div>
<div class="a" style="left:244.6px;top:662.96px;font-size:16px;line-height:21px;color:#7a7c7e;transform: scaleX(0.9707);transform-origin:0 0;">38 ms</div>
<svg class="r" style="left:96px;top:694.5px;" width="12" height="8" viewBox="0 0 12 8"><use href="#chevd"/></svg>
<svg class="r" style="left:118.4px;top:690.5px;" width="18" height="17" viewBox="0 0 18 17"><use href="#conn"/></svg>
<div class="a" style="left:141.5px;top:687.96px;font-size:16px;line-height:21px;color:#bbbbbb;transform: scaleX(1.0189);transform-origin:0 0;">console</div>
<div class="r" style="left:460px;top:470px;width:10px;height:205px;background:rgba(120,124,128,0.45);"></div>
<div class="r" style="left:472px;top:430px;width:1px;height:276px;background:#323436;"></div>
<div class="r" style="left:473px;top:430px;width:949px;height:34px;background:#3c3f41;"></div>
<svg class="r" style="left:491px;top:439px;" width="18" height="17" viewBox="0 0 18 17"><path d="M0.5 0.5H16.5V11H9.5V15.5H0.5Z" fill="#b7babc"/><path d="M3 3.5L7 6.5L3 9.5" stroke="#3c3f41" stroke-width="1.6" fill="none"/><circle cx="13" cy="12.5" r="4.6" fill="#e0a03c"/><path d="M13 9.5V15M10.8 12.8L13 15L15.2 12.8" stroke="#3c3f41" stroke-width="1.2" fill="none"/></svg>
<div class="a" style="left:514.4px;top:436.80px;font-size:15px;line-height:20px;color:#bbbbbb;transform: scaleX(0.9860);transform-origin:0 0;">Output</div>
<svg class="r" style="left:585px;top:439px;" width="18" height="16" viewBox="0 0 18 16"><use href="#tbl"/></svg>
<div class="a" style="left:608.8px;top:436.80px;font-size:15px;line-height:20px;color:#bbbbbb;transform: scaleX(0.9128);transform-origin:0 0;">item.usertable</div>
<svg class="r" style="left:704px;top:441px;" width="10" height="10" viewBox="0 0 10 10"><path d="M0.5 0.5L9.5 9.5M9.5 0.5L0.5 9.5" stroke="#56595b" stroke-width="1.3"/></svg>
<div class="r" style="left:568px;top:461.5px;width:160px;height:2.5px;background:#8d9093;"></div>
<div class="r" style="left:473px;top:464px;width:949px;height:1px;background:#323232;"></div>
<div class="r" style="left:473px;top:465px;width:949px;height:34px;background:#3c3f41;"></div>
<div class="r" style="left:473px;top:499px;width:949px;height:1px;background:#323232;"></div>
<svg class="r" style="left:487px;top:475px;" width="14" height="14" viewBox="0 0 14 14"><path d="M1 0.5V13.5M12.5 0.5L6 7L12.5 13.5" stroke="#55585a" stroke-width="1.6" fill="none"/></svg>
<svg class="r" style="left:521px;top:475px;" width="9" height="14" viewBox="0 0 9 14"><path d="M8 0.5L1.5 7L8 13.5" stroke="#55585a" stroke-width="1.6" fill="none"/></svg>
<div class="a" style="left:548.8px;top:473.48px;font-size:14.5px;line-height:19px;color:#bbbbbb;transform: scaleX(0.9691);transform-origin:0 0;">0 rows</div>
<svg class="r" style="left:596px;top:481px;" width="10" height="6" viewBox="0 0 10 6"><path d="M0.8 0.8L5 4.8L9.2 0.8" stroke="#909294" stroke-width="1.5" fill="none"/></svg>
<svg class="r" style="left:623px;top:475px;" width="9" height="14" viewBox="0 0 9 14"><path d="M1 0.5L7.5 7L1 13.5" stroke="#55585a" stroke-width="1.6" fill="none"/></svg>
<svg class="r" style="left:652px;top:475px;" width="15" height="14" viewBox="0 0 15 14"><path d="M1.5 0.5L8 7L1.5 13.5M13.5 0.5V13.5" stroke="#55585a" stroke-width="1.6" fill="none"/></svg>
<div class="r" style="left:680px;top:470px;width:1px;height:24px;background:#4a4d4f;"></div>
<svg class="r" style="left:692px;top:474px;" width="18" height="16" viewBox="0 0 18 16"><path d="M2.2 7A7 6.2 0 0 1 15 4.8M15.8 9A7 6.2 0 0 1 3 11.2" stroke="#c3c5c7" stroke-width="2.2" fill="none"/><path d="M16.8 0.5V7H10.5Z M1.2 15.5V9H7.5Z" fill="#c3c5c7"/></svg>
<div class="r" style="left:721px;top:470px;width:1px;height:24px;background:#4a4d4f;"></div>
<svg class="r" style="left:735px;top:475px;" width="14" height="14" viewBox="0 0 14 14"><path d="M7 0V14M0 7H14" stroke="#c3c5c7" stroke-width="2.2"/></svg>
<div class="r" style="left:768px;top:481px;width:14px;height:2px;background:#55585a;"></div>
<div class="r" style="left:795px;top:470px;width:1px;height:24px;background:#4a4d4f;"></div>
<div class="a" style="left:809.5px;top:473.48px;font-size:14.5px;line-height:19px;color:#bbbbbb;transform: scaleX(0.9717);transform-origin:0 0;">Tx: Auto</div>
<svg class="r" style="left:870px;top:481px;" width="10" height="6" viewBox="0 0 10 6"><path d="M0.8 0.8L5 4.8L9.2 0.8" stroke="#909294" stroke-width="1.5" fill="none"/></svg>
<svg class="r" style="left:896px;top:471px;" width="16" height="19" viewBox="0 0 16 19"><text x="1.5" y="7" font-family="Liberation Sans" font-size="7.5" fill="#55585a">DB</text><path d="M3 14L8 9L13 14H10V18H6V14Z" fill="#55585a"/></svg>
<svg class="r" style="left:928px;top:475px;" width="18" height="14" viewBox="0 0 18 14"><path d="M1 7L6 12L17 1.5" stroke="#55585a" stroke-width="2.4" fill="none"/></svg>
<svg class="r" style="left:961px;top:473px;" width="17" height="16" viewBox="0 0 17 16"><path d="M2 5H10.5A5 5 0 0 1 10.5 15H5" stroke="#55585a" stroke-width="2.2" fill="none"/><path d="M0.5 5L5.5 0.5V9.5Z" fill="#55585a"/></svg>
<div class="r" style="left:989px;top:470px;width:1px;height:24px;background:#4a4d4f;"></div>
<div class="r" style="left:1004px;top:474px;width:13px;height:13px;background:#55585a;"></div>
<div class="r" style="left:1030px;top:470px;width:1px;height:24px;background:#4a4d4f;"></div>
<div class="a" style="left:1042px;top:473.48px;font-size:14.5px;line-height:19px;color:#bbbbbb;transform: scaleX(0.9202);transform-origin:0 0;">DDL</div>
<div class="r" style="left:1081px;top:470px;width:1px;height:24px;background:#4a4d4f;"></div>
<svg class="r" style="left:1105px;top:478px;" width="10" height="8" viewBox="0 0 10 8"><path d="M0.8 0.8L4 4L0.8 7.2M5.8 0.8L9 4L5.8 7.2" stroke="#b0b2b4" stroke-width="1.2" fill="none"/></svg>
<div class="a" style="left:1134px;top:473.48px;font-size:14.5px;line-height:19px;color:#bbbbbb;transform: scaleX(0.9308);transform-origin:0 0;">Comma-...d (CSV)</div>
<svg class="r" style="left:1256px;top:481px;" width="10" height="6" viewBox="0 0 10 6"><path d="M0.8 0.8L5 4.8L9.2 0.8" stroke="#909294" stroke-width="1.5" fill="none"/></svg>
<div class="r" style="left:1277px;top:470px;width:1px;height:24px;background:#4a4d4f;"></div>
<svg class="r" style="left:1291px;top:472px;" width="16" height="18" viewBox="0 0 16 18"><path d="M8 0V11M3 6.5L8 11.5L13 6.5" stroke="#55585a" stroke-width="2" fill="none"/><rect x="0" y="15" width="16" height="2" fill="#55585a"/></svg>
<svg class="r" style="left:1322px;top:472px;" width="17" height="18" viewBox="0 0 17 18"><rect x="0" y="0.5" width="17" height="2.2" fill="#c3c5c7"/><path d="M8.5 17.5V6M3.5 10.5L8.5 5.5L13.5 10.5" stroke="#c3c5c7" stroke-width="2.2" fill="none"/></svg>
<div class="r" style="left:1350px;top:470px;width:1px;height:24px;background:#4a4d4f;"></div>
<svg class="r" style="left:1363px;top:474px;" width="22" height="20" viewBox="0 0 22 20"><path d="M0.8 8C3.5 3.2 7 1.5 10 1.5C13 1.5 16.5 3.2 19.2 8C16.5 12.8 13 14.5 10 14.5C7 14.5 3.5 12.8 0.8 8Z" fill="#c3c5c7"/><circle cx="10" cy="8" r="4.2" fill="#3c3f41"/><circle cx="10" cy="8" r="2.4" fill="#c3c5c7"/><path d="M14 15.5H21L17.5 19Z" fill="#c3c5c7"/></svg>
<svg class="r" style="left:1396px;top:473px;" width="22" height="21" viewBox="0 0 22 21"><path d="M6.07 2.80L6.91 2.51L7.16 0.21L9.84 0.21L10.09 2.51L12.22 3.54L12.89 4.12L15.01 3.19L16.35 5.51L14.49 6.88L14.66 9.24L14.49 10.12L16.35 11.49L15.01 13.81L12.89 12.88L10.93 14.20L10.09 14.49L9.84 16.79L7.16 16.79L6.91 14.49L4.78 13.46L4.11 12.88L1.99 13.81L0.65 11.49L2.51 10.12L2.34 7.76L2.51 6.88L0.65 5.51L1.99 3.19L4.11 4.12Z" fill="#c3c5c7"/><circle cx="8.5" cy="8.5" r="2.6" fill="#3c3f41"/><path d="M14.5 16H21.5L18 19.5Z" fill="#c3c5c7"/></svg>
<div class="r" style="left:473px;top:500px;width:949px;height:206px;background:#2b2b2b;"></div>
<div class="r" style="left:474px;top:500px;width:489px;height:31px;background:#3a3d3f;"></div>
<svg class="r" style="left:524px;top:508px;" width="18" height="15" viewBox="0 0 18 15"><use href="#col"/></svg>
<div class="a" style="left:550.2px;top:507.24px;font-size:16px;line-height:21px;color:#bbbbbb;font-family:'Liberation Mono',monospace;transform: scaleX(0.9634);transform-origin:0 0;">id</div>
<svg class="r" style="left:580px;top:509px;" width="8" height="13" viewBox="0 0 8 13"><path d="M0.5 5L4 0.8L7.5 5Z M0.5 8L4 12.2L7.5 8Z" fill="#b0b2b4"/></svg>
<svg class="r" style="left:603px;top:508px;" width="18" height="15" viewBox="0 0 18 15"><use href="#col"/></svg>
<div class="a" style="left:628.5px;top:507.24px;font-size:16px;line-height:21px;color:#bbbbbb;font-family:'Liberation Mono',monospace;transform: scaleX(0.9972);transform-origin:0 0;">name</div>
<svg class="r" style="left:710px;top:509px;" width="8" height="13" viewBox="0 0 8 13"><path d="M0.5 5L4 0.8L7.5 5Z M0.5 8L4 12.2L7.5 8Z" fill="#b0b2b4"/></svg>
<svg class="r" style="left:762px;top:508px;" width="18" height="15" viewBox="0 0 18 15"><use href="#col"/></svg>
<div class="a" style="left:787.5px;top:507.24px;font-size:16px;line-height:21px;color:#bbbbbb;font-family:'Liberation Mono',monospace;transform: scaleX(0.9822);transform-origin:0 0;">age</div>
<svg class="r" style="left:827px;top:509px;" width="8" height="13" viewBox="0 0 8 13"><path d="M0.5 5L4 0.8L7.5 5Z M0.5 8L4 12.2L7.5 8Z" fill="#b0b2b4"/></svg>
<svg class="r" style="left:850px;top:508px;" width="18" height="15" viewBox="0 0 18 15"><use href="#col"/></svg>
<div class="a" style="left:876.3px;top:507.24px;font-size:16px;line-height:21px;color:#bbbbbb;font-family:'Liberation Mono',monospace;transform: scaleX(0.9926);transform-origin:0 0;">sex</div>
<svg class="r" style="left:945px;top:509px;" width="8" height="13" viewBox="0 0 8 13"><path d="M0.5 5L4 0.8L7.5 5Z M0.5 8L4 12.2L7.5 8Z" fill="#b0b2b4"/></svg>
<div class="r" style="left:0px;top:706px;width:1452px;height:27px;background:#3c3f41;"></div>
<div class="r" style="left:0px;top:705px;width:1452px;height:1px;background:#2f3133;"></div>
<div class="r" style="left:232px;top:706px;width:113px;height:26px;background:#2f3133;"></div>
<svg class="r" style="left:44px;top:713px;" width="15" height="15" viewBox="0 0 15 15"><circle cx="7.5" cy="7.5" r="7" fill="#afb1b3"/><rect x="6.3" y="3" width="2.4" height="6" fill="#3c3f41"/><rect x="6.3" y="10.3" width="2.4" height="2.3" fill="#3c3f41"/></svg>
<div class="a" style="left:64.5px;top:712.48px;font-size:14.5px;line-height:19px;color:#b9bbbd;transform: scaleX(0.9176);transform-origin:0 0;">6: Problems</div>
<div class="r" style="left:64.5px;top:728px;width:7px;height:1px;background:#b9bbbd;"></div>
<svg class="r" style="left:163px;top:714px;" width="14" height="14" viewBox="0 0 14 14"><g fill="#afb1b3"><rect x="0" y="0.5" width="3" height="2.5"/><rect x="4.5" y="0.5" width="9.5" height="2.5"/><rect x="0" y="5.5" width="3" height="2.5"/><rect x="4.5" y="5.5" width="9.5" height="2.5"/><rect x="0" y="10.5" width="3" height="2.5"/><rect x="4.5" y="10.5" width="9.5" height="2.5"/></g></svg>
<div class="a" style="left:181.8px;top:712.48px;font-size:14.5px;line-height:19px;color:#b9bbbd;transform: scaleX(0.9297);transform-origin:0 0;">TODO</div>
<svg class="r" style="left:246px;top:712px;" width="17" height="17" viewBox="0 0 17 17"><path d="M4.5 0.8H12.5L16.5 8.5L12.5 16.2H4.5L0.5 8.5Z" fill="#afb1b3"/><path d="M6.5 4.8L12 8.5L6.5 12.2Z" fill="#2f3133"/></svg>
<div class="a" style="left:267px;top:712.48px;font-size:14.5px;line-height:19px;color:#c5c7c9;transform: scaleX(0.9005);transform-origin:0 0;">8: Services</div>
<div class="r" style="left:267px;top:728px;width:7px;height:1px;background:#c5c7c9;"></div>
<svg class="r" style="left:1328px;top:712px;" width="18" height="17" viewBox="0 0 18 17"><circle cx="8.5" cy="8.5" r="8.2" fill="#3f9a4f"/><text x="5.3" y="13" font-family="Liberation Sans" font-weight="bold" font-size="11" fill="#fff">1</text></svg>
<div class="a" style="left:1350.6px;top:711.48px;font-size:14.5px;line-height:19px;color:#b9bbbd;transform: scaleX(0.9095);transform-origin:0 0;">Event Log</div>
<div class="r" style="left:0px;top:732px;width:1452px;height:27px;background:#3c3f41;"></div>
<div class="r" style="left:0px;top:732px;width:1452px;height:1px;background:#2f3133;"></div>
<svg class="r" style="left:7px;top:738px;" width="17" height="16" viewBox="0 0 17 16"><rect x="4.5" y="0.8" width="11.5" height="11" fill="none" stroke="#a9adb1" stroke-width="1.5"/><path d="M1 4.5V15H12" stroke="#a9adb1" stroke-width="1.5" fill="none"/></svg>
<div class="a" style="left:35.4px;top:735.96px;font-size:16px;line-height:21px;color:#b9bbbd;transform: scaleX(1.0141);transform-origin:0 0;">Connected (a minute ago)</div>
<div class="a" style="left:1116.5px;top:735.13px;font-size:15.5px;line-height:21px;color:#b9bbbd;transform: scaleX(1.0008);transform-origin:0 0;">23 chars</div>
<div class="a" style="left:1198px;top:735.13px;font-size:15.5px;line-height:21px;color:#b9bbbd;transform: scaleX(0.8348);transform-origin:0 0;">3:1</div>
<div class="a" style="left:1236px;top:735.13px;font-size:15.5px;line-height:21px;color:#b9bbbd;transform: scaleX(0.8250);transform-origin:0 0;">CRLF</div>
<div class="a" style="left:1287.5px;top:735.13px;font-size:15.5px;line-height:21px;color:#b9bbbd;transform: scaleX(1.0587);transform-origin:0 0;">UTF-8</div>
<div class="a" style="left:1343.4px;top:735.13px;font-size:15.5px;line-height:21px;color:#b9bbbd;transform: scaleX(0.9896);transform-origin:0 0;">4 spaces</div>
<svg class="r" style="left:1424px;top:743px;" width="11" height="10" viewBox="0 0 11 10"><rect x="0" y="0" width="10" height="9" fill="#a9adb1"/></svg>
<svg class="r" style="left:1280px;top:692px;" width="160" height="52" viewBox="0 0 160 52"><g stroke="#d42626" stroke-width="1.7" fill="none" opacity="0.95">
<path d="M3 9.5H47M17.7 4V15M32 4V15"/>
<path d="M6 26L9 19H46L43 24M12 25H38V35.5H12ZM25 21V40M12 30.5H38M10 39.5H40"/>
<path d="M78.5 4V24M95 15L73.4 40M65.5 19L68 26M83 22L93 40M88 21L91 15"/>
<path d="M116 14H146V32H116ZM131 4V46M146 14V32M116 23H146M113 42L145 38"/>
</g></svg>
<svg class="r" style="left:1353px;top:715px;" width="37" height="18" viewBox="0 0 37 18"><ellipse cx="18.5" cy="9" rx="17.5" ry="8" fill="#d42626" opacity="0.75"/><text x="5" y="14" font-family="Liberation Sans" font-style="italic" font-size="13" fill="#f0c0c0" opacity="0.85">php</text></svg>
<div class="a" style="left:1205px;top:726.24px;font-size:19.5px;line-height:26px;color:#f2f2f2;transform: scaleX(0.9924);transform-origin:0 0;text-shadow:0 0 1.5px #1a1a1a,0 0 1px #1a1a1a;">CSDN @weixin_43294936</div>
<div class="r" style="left:1451px;top:125px;width:1px;height:256px;background:#a8aaac;"></div>
<div class="r" style="left:1451px;top:429px;width:1px;height:154px;background:#a8aaac;"></div>
</body></html>
